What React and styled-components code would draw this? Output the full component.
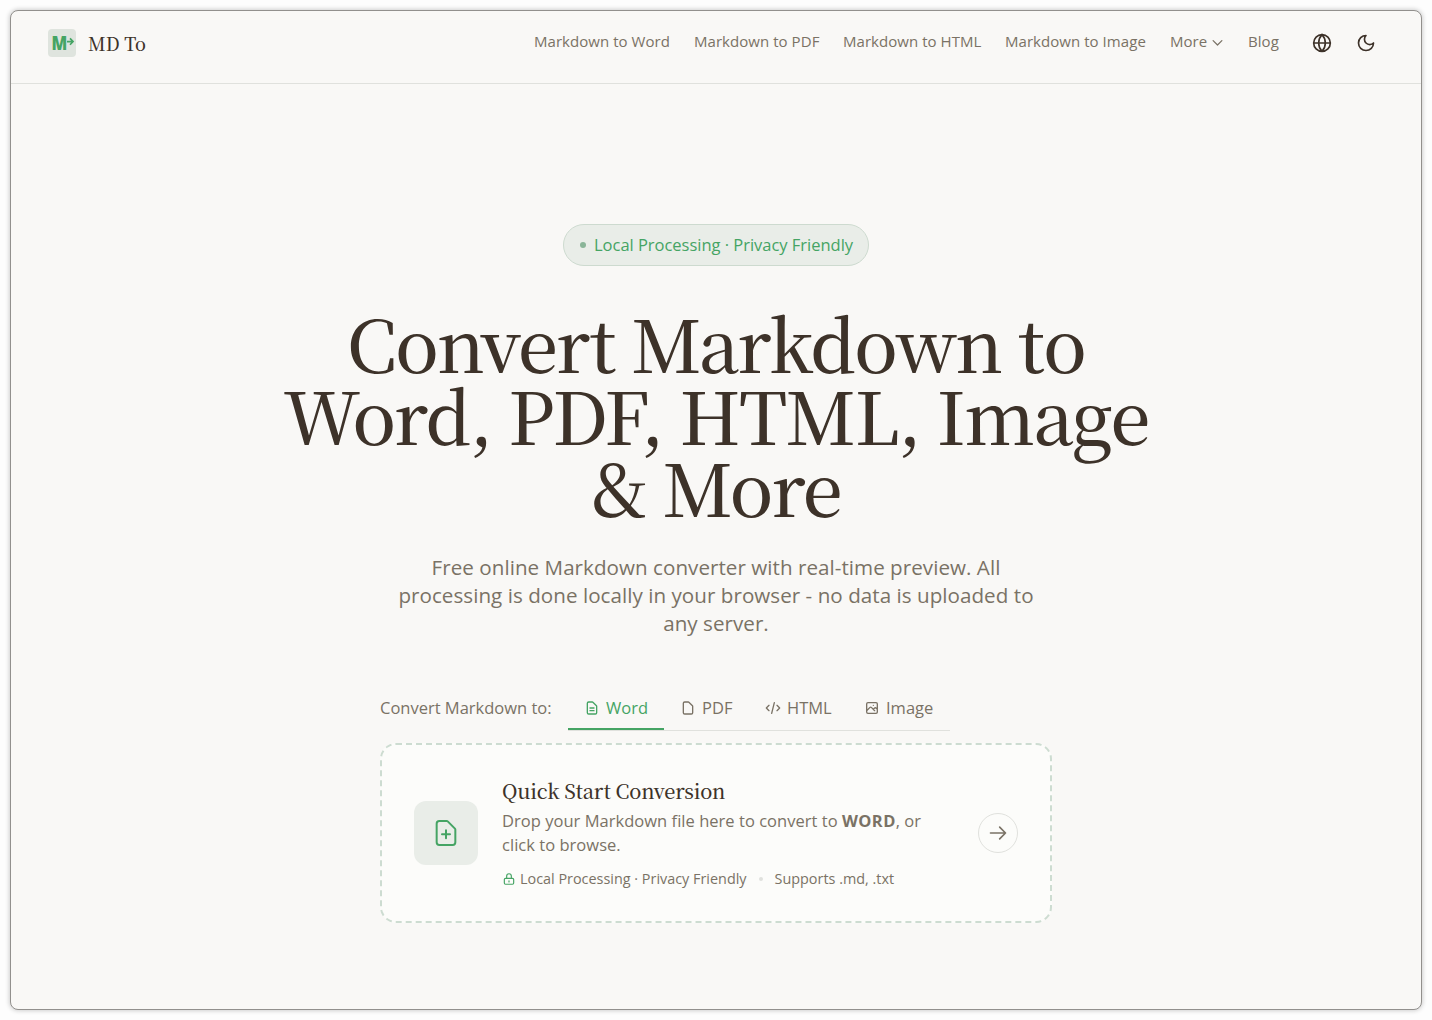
import React from 'react';
import styled, { createGlobalStyle, css } from 'styled-components';

const sans = '"Open Sans", "Noto Sans", sans-serif';
const serif = '"Noto Serif CJK SC", "Source Serif 4", "Liberation Serif", serif';
const ink = '#3d3229';
const muted = '#7a7265';
const green = '#45a464';
const line = '#e0e1dd';

const GlobalStyle = createGlobalStyle`
  * { box-sizing: border-box; }
  body { margin: 0; background: #fdfdfd; font-family: ${sans}; color: ${ink}; }
  h1, h2, p { margin: 0; font-weight: 400; }
  button { font: inherit; color: inherit; background: none; border: 0; padding: 0; }
`;

const Page = styled.div`
  height: 1020px;
  padding: 10px;
`;

const Window = styled.div`
  height: 1000px;
  display: flex;
  flex-direction: column;
  background: #f9f8f6;
  border: 1px solid #92908d;
  border-radius: 8px;
  box-shadow: 0 0 4px 1px rgba(0, 0, 0, 0.18);
  overflow: hidden;
`;

const Header = styled.header`
  height: 73px;
  flex: none;
  display: flex;
  align-items: center;
  justify-content: space-between;
  padding: 0 37px 8px;
  border-bottom: 1px solid ${line};
`;

const Brand = styled.div`
  display: flex;
  align-items: center;
  gap: 12px;
`;

const BrandMark = styled.span`
  width: 28px;
  height: 28px;
  display: block;
  border-radius: 4px;
  background: #dfe4de;
`;

const BrandName = styled.span`
  font: 500 18px/28px ${serif};
`;

const Nav = styled.nav`
  display: flex;
  align-items: center;
  gap: 24px;
`;

const NavLink = styled.a`
  display: flex;
  align-items: center;
  gap: 3px;
  width: ${(p) => p.$width}px;
  font-size: 15px;
  line-height: 20px;
  letter-spacing: 0.05px;
  white-space: nowrap;
  color: ${muted};
  padding-bottom: 4px;
  svg { margin-top: 3px; }
`;

const Actions = styled.div`
  display: flex;
  gap: 8px;
`;

const IconButton = styled.button`
  width: 36px;
  height: 36px;
  display: grid;
  place-items: center;
  color: ${ink};
`;

const Hero = styled.main`
  display: flex;
  flex-direction: column;
  align-items: center;
  padding-top: 140px;
`;

const Pill = styled.div`
  width: 306px;
  height: 42px;
  display: flex;
  align-items: center;
  gap: 8px;
  padding-left: 16px;
  border: 1px solid #cddacf;
  border-radius: 21px;
  background: #e9ede8;
  color: ${green};
  font-size: 16.5px;
  letter-spacing: -0.02px;
  white-space: nowrap;
`;

const PillText = styled.span`
  padding-bottom: 2px;
`;

const Dot = styled.i`
  width: ${(p) => p.$size}px;
  height: ${(p) => p.$size}px;
  flex: none;
  border-radius: 50%;
  background: ${(p) => p.$color};
`;

const Title = styled.h1`
  width: 896px;
  margin-top: 40px;
  font: 500 72px/72px ${serif};
  letter-spacing: -1.8px;
  text-align: center;
  white-space: nowrap;
`;

const Subtitle = styled.p`
  width: 672px;
  margin-top: 31px;
  font-size: 20.6px;
  line-height: 28px;
  letter-spacing: 0.04px;
  text-align: center;
  color: ${muted};
`;

const Converter = styled.section`
  width: 672px;
  margin-top: 49px;
`;

const TabRow = styled.div`
  height: 45px;
  display: flex;
  font-size: 16.5px;
  line-height: 24px;
  white-space: nowrap;
  color: ${muted};
`;

const TabLabel = styled.span`
  width: 188px;
  padding-top: 10px;
`;

const Tabs = styled.div`
  display: flex;
  border-bottom: 1px solid ${line};
`;

const Tab = styled.button`
  width: ${(p) => p.$width}px;
  display: flex;
  align-items: center;
  gap: 6px;
  padding: 2px 0 0 16px;
  border-bottom: 2px solid transparent;
  ${(p) => p.$active && css`
    color: ${green};
    border-color: ${green};
  `}
`;

const DropCard = styled.div`
  height: 180px;
  margin-top: 12px;
  display: flex;
  align-items: center;
  gap: 24px;
  padding: 0 32px;
  border: 2px dashed #cddcd1;
  border-radius: 16px;
  background: #fcfcfa;
`;

const FileBadge = styled.div`
  width: 64px;
  height: 64px;
  flex: none;
  display: grid;
  place-items: center;
  border-radius: 12px;
  background: #e9ede8;
  color: ${green};
`;

const CardBody = styled.div`
  flex: 1;
  min-width: 0;
`;

const CardTitle = styled.h2`
  font: 500 20px/28px ${serif};
  letter-spacing: -0.2px;
`;

const CardText = styled.p`
  margin-top: 4px;
  font-size: 16.5px;
  line-height: 24px;
  letter-spacing: 0.03px;
  color: ${muted};
  strong { font-weight: 700; letter-spacing: 0.4px; }
`;

const Meta = styled.div`
  height: 20px;
  margin-top: 12px;
  display: flex;
  align-items: center;
  gap: 12px;
  font-size: 14.4px;
  line-height: 20px;
  white-space: nowrap;
  color: ${muted};
`;

const MetaItem = styled.span`
  display: flex;
  align-items: center;
  gap: 4px;
  svg { color: ${green}; }
`;

const GoButton = styled.button`
  width: 40px;
  height: 40px;
  flex: none;
  display: grid;
  place-items: center;
  border: 1px solid ${line};
  border-radius: 50%;
  color: ${muted};
`;

const Svg = styled.svg`
  display: block;
  flex: none;
  fill: none;
  stroke: currentColor;
  stroke-linecap: round;
  stroke-linejoin: round;
`;

const sheet = 'm2 5H7a2 2 0 01-2-2V5a2 2 0 012-2h5.586a1 1 0 01.707.293l5.414 5.414a1 1 0 01.293.707V19a2 2 0 01-2 2z';
const paths = {
  word: 'M9 12h6m-6 4h6' + sheet,
  pdf: 'M15 16' + sheet,
  add: 'M9 13h6m-3-3v6m3 0' + sheet,
  html: 'M10 20l4-16m4 4l4 4-4 4M6 16l-4-4 4-4',
  image: 'M4 16l4.586-4.586a2 2 0 012.828 0L16 16m-2-2l1.586-1.586a2 2 0 012.828 0L20 14m-6-6h.01M6 20h12a2 2 0 002-2V6a2 2 0 00-2-2H6a2 2 0 00-2 2v12a2 2 0 002 2z',
  lock: 'M12 15v2m-6 4h12a2 2 0 002-2v-6a2 2 0 00-2-2H6a2 2 0 00-2 2v6a2 2 0 002 2zm10-10V7a4 4 0 00-8 0v4h8z',
  arrow: 'M14 5l7 7m0 0l-7 7m7-7H3',
  chevron: 'M19 9l-7 7-7-7',
  moon: 'M12 3a6 6 0 0 0 9 9 9 9 0 1 1-9-9Z',
  globe: 'M2 12a10 10 0 1 0 20 0a10 10 0 1 0-20 0M12 2a14.5 14.5 0 0 0 0 20 14.5 14.5 0 0 0 0-20M2 12h20',
};

function Icon({ name, size, weight = 2 }) {
  return (
    <Svg width={size} height={size} viewBox="0 0 24 24" strokeWidth={weight}>
      <path d={paths[name]} />
    </Svg>
  );
}

function Logo() {
  return (
    <BrandMark>
      <svg width="28" height="28" viewBox="0 0 28 28">
        <text x="3.4" y="21" fontFamily="Open Sans" fontWeight="800" fontSize="19.3" fill={green} textLength="15.8" lengthAdjust="spacingAndGlyphs">M</text>
        <path d="M19 12.6h5.6M22 9.4l3.1 3.2-3.1 3.2" fill="none" stroke={green} strokeWidth="1.6" />
      </svg>
    </BrandMark>
  );
}

const links = [
  ['Markdown to Word', 136],
  ['Markdown to PDF', 125],
  ['Markdown to HTML', 138],
  ['Markdown to Image', 141],
  ['More', 54],
  ['Blog', 32],
];

const tabs = [
  ['Word', 'word', 96],
  ['PDF', 'pdf', 85],
  ['HTML', 'html', 99],
  ['Image', 'image', 102],
];

export default function App() {
  return (
    <Page>
      <GlobalStyle />
      <Window>
        <Header>
          <Brand>
            <Logo />
            <BrandName>MD To</BrandName>
          </Brand>
          <Nav>
            {links.map(([label, width]) => (
              <NavLink key={label} $width={width}>
                {label}
                {label === 'More' && <Icon name="chevron" size={15} />}
              </NavLink>
            ))}
            <Actions>
              <IconButton aria-label="Language"><Icon name="globe" size={20} /></IconButton>
              <IconButton aria-label="Theme"><Icon name="moon" size={20} /></IconButton>
            </Actions>
          </Nav>
        </Header>
        <Hero>
          <Pill>
            <Dot $size={6} $color="#8ab598" />
            <PillText>Local Processing · Privacy Friendly</PillText>
          </Pill>
          <Title>
            Convert Markdown to<br />Word, PDF, HTML, Image<br />&amp; More
          </Title>
          <Subtitle>
            Free online Markdown converter with real-time preview. All processing is done locally in your
            browser - no data is uploaded to any server.
          </Subtitle>
          <Converter>
            <TabRow>
              <TabLabel>Convert Markdown to:</TabLabel>
              <Tabs>
                {tabs.map(([label, icon, width], i) => (
                  <Tab key={label} $width={width} $active={i === 0}>
                    <Icon name={icon} size={16} />
                    {label}
                  </Tab>
                ))}
              </Tabs>
            </TabRow>
            <DropCard>
              <FileBadge><Icon name="add" size={32} weight={1.5} /></FileBadge>
              <CardBody>
                <CardTitle>Quick Start Conversion</CardTitle>
                <CardText>
                  Drop your Markdown file here to convert to <strong>WORD</strong>, or click to browse.
                </CardText>
                <Meta>
                  <MetaItem><Icon name="lock" size={14} />Local Processing · Privacy Friendly</MetaItem>
                  <Dot $size={4} $color="#e0e1dd" />
                  <span>Supports .md, .txt</span>
                </Meta>
              </CardBody>
              <GoButton aria-label="Start"><Icon name="arrow" size={20} /></GoButton>
            </DropCard>
          </Converter>
        </Hero>
      </Window>
    </Page>
  );
}
